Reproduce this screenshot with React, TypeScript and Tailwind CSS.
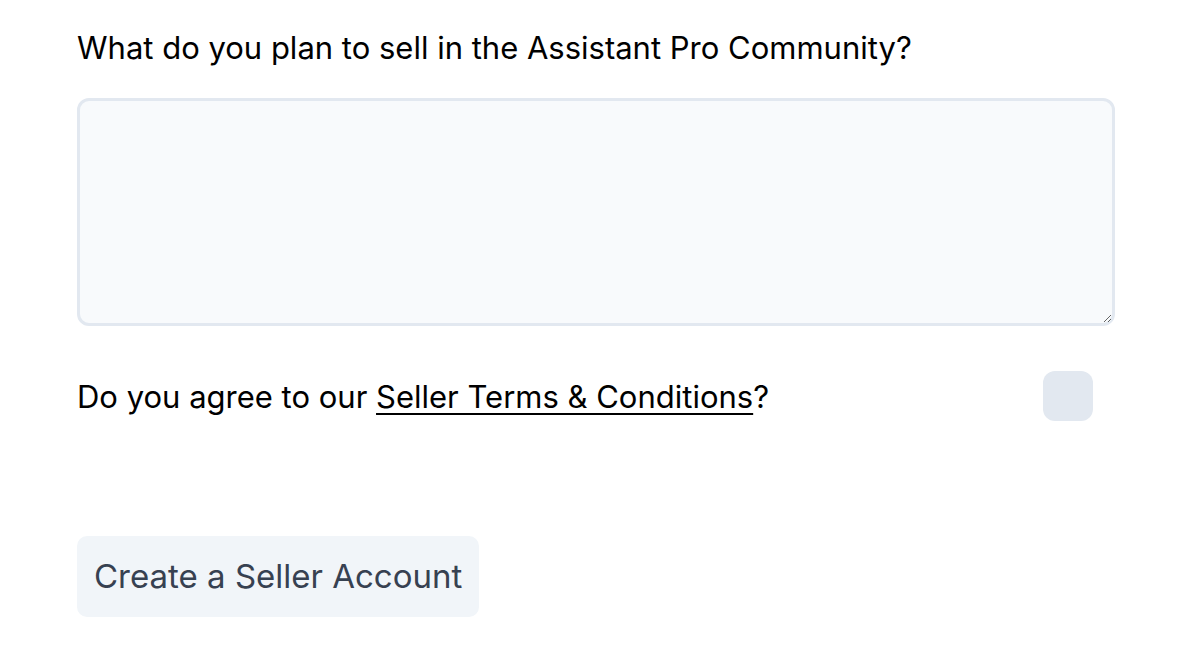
export default function App() {
  return (
    <div className="w-[1200px] h-[653px] bg-white" style={{ fontFamily: 'Inter, "Noto Sans", sans-serif' }}>
      <div className="pl-[77px] pr-[85px] pt-[28px]">
        <div className="text-[31px] leading-[40px] text-black">What do you plan to sell in the Assistant Pro Community?</div>
        <textarea className="mt-[30px] block w-full h-[228px] rounded-[12px] border-[3px] border-[#e2e8f0] bg-[#f8fafc] outline-none resize-y"></textarea>
        <div className="mt-[46px] flex items-center justify-between pr-[22px]">
          <div className="text-[31px] leading-[40px] text-black">
            Do you agree to our <a className="underline underline-offset-[5px] decoration-[2px]">Seller Terms &amp; Conditions</a>?
          </div>
          <div className="w-[50px] h-[50px] rounded-[12px] bg-[#e2e8f0] -translate-y-[1px]"></div>
        </div>
        <button className="mt-[114px] h-[81px] px-[17px] rounded-[10px] bg-[#f1f5f9] text-[33px] text-[#374151]">Create a Seller Account</button>
      </div>
    </div>
  );
}
